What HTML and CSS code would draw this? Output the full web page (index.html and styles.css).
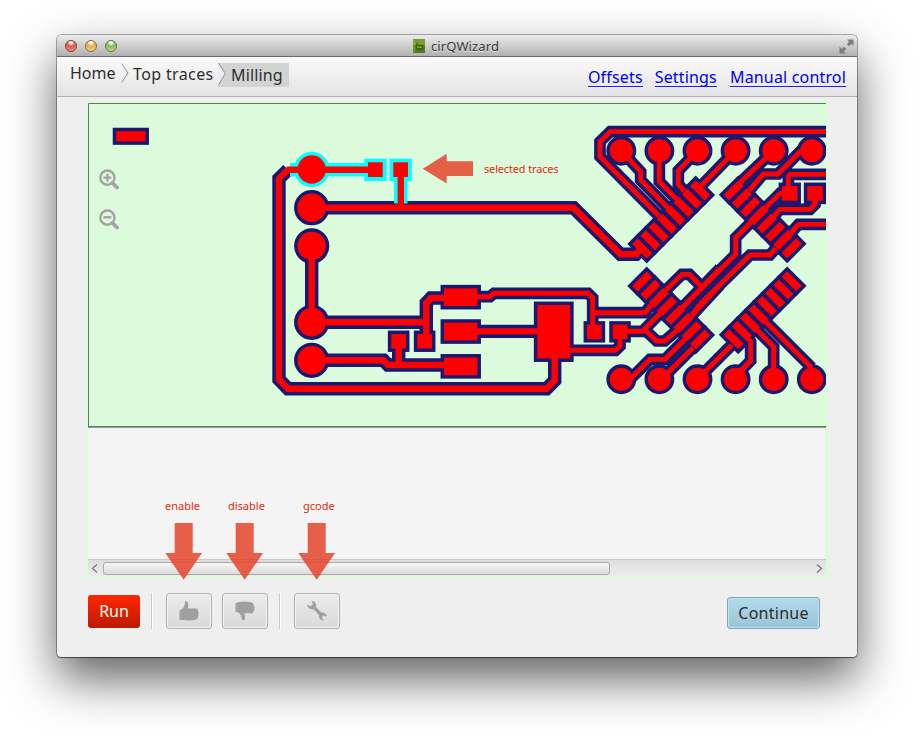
FILE: index.html
```html
<!DOCTYPE html>
<html lang="en">
<head>
<meta charset="utf-8">
<title>cirQWizard</title>
<link rel="stylesheet" href="styles.css">
</head>
<body>
<main class="window">
  <header class="titlebar">
    <div class="lights"><i class="light red"></i><i class="light yellow"></i><i class="light green"></i></div>
    <div class="title">
      <svg class="app-icon" width="12" height="14" viewBox="0 0 12 14"><rect width="12" height="14" fill="#54801c"/><rect width="12" height="6" fill="#76a02c"/><path d="M4 3.500V10H9.500V6.500H5" fill="none" stroke="#3a5f14" stroke-width="1.300"/><path d="M4 8.200H9" stroke="#8fb646"/><path d="M1 1V13" stroke="#8fb646" stroke-width=".8"/></svg>
      <span class="title-text">cirQWizard</span>
    </div>
    <svg class="expand" width="15" height="15" viewBox="0 0 15 15"><path d="M8 0.500H14.500V7L12.300 4.900 10 7.200 7.800 5 10.100 2.700ZM.5 7.500V14.500H7L4.900 12.300 7.200 10 5 7.800 2.700 10.100Z" fill="#7d7d7d"/></svg>
  </header>
  <nav class="navbar">
    <div class="crumbs">
      <span class="crumb home">Home</span>
      <svg class="sep" width="8" height="20" viewBox="0 0 8 20"><path d="M.7.5 7 10 .7 19.500" fill="none" stroke="#8e8e93"/></svg>
      <span class="crumb top">Top traces</span>
      <span class="crumb current"><svg class="notch" width="8" height="24" viewBox="0 0 8 24"><path d="M0 0 7.500 10.500 0 23Z" fill="#ececec"/><path d="M.5 0 7.300 10.500.5 22" fill="none" stroke="#8e8e93"/></svg><span class="milling">Milling</span></span>
    </div>
    <div class="links"><a class="l1">Offsets</a><a class="l2">Settings</a><a class="l3">Manual control</a></div>
  </nav>
  <section class="content">
    <div class="board">
      <svg class="pcb" width="738" height="325" viewBox="88 103 738 325">
        <defs>
          <g id="row">
            <rect x="-44.900" y="-10.300" width="7.800" height="20.600"/><rect x="-33.200" y="-10.300" width="7.800" height="20.600"/>
            <rect x="-21.500" y="-10.300" width="7.800" height="20.600"/><rect x="-9.800" y="-10.300" width="7.800" height="20.600"/>
            <rect x="2" y="-10.300" width="7.800" height="20.600"/><rect x="13.700" y="-10.300" width="7.800" height="20.600"/>
            <rect x="25.400" y="-10.300" width="7.800" height="20.600"/><rect x="37.100" y="-10.300" width="7.800" height="20.600"/>
          </g>
          <g id="pads">
            <rect x="116.200" y="131.200" width="29.300" height="10.200"/>
            <circle cx="311.700" cy="207.700" r="14.200"/><circle cx="311.700" cy="246" r="14.200"/>
            <circle cx="311.700" cy="322.300" r="14.200"/><circle cx="311.700" cy="360.300" r="14.200"/>
            <rect x="391.300" y="334" width="14.700" height="14.500"/><rect x="417.300" y="334" width="14.700" height="14.500"/>
            <rect x="444" y="288.300" width="33.500" height="17.700"/><rect x="444" y="322.700" width="33.500" height="17.700"/><rect x="444" y="357.500" width="33.500" height="17.700"/>
            <rect x="537.300" y="305" width="32.900" height="53.500"/>
            <rect x="587" y="324.600" width="14.700" height="14.500"/><rect x="612.700" y="324.600" width="14.700" height="14.500"/>
            <rect x="782" y="186" width="15.500" height="14.700"/><rect x="807.300" y="186" width="15.500" height="14.700"/>
            <circle cx="621.300" cy="150.700" r="11.500"/><circle cx="659.400" cy="150.700" r="11.500"/><circle cx="697.500" cy="150.700" r="11.500"/><circle cx="735.600" cy="150.700" r="11.500"/><circle cx="773.700" cy="150.700" r="11.500"/><circle cx="811.800" cy="150.700" r="11.500"/>
            <circle cx="621.300" cy="379.300" r="11.500"/><circle cx="659.400" cy="379.300" r="11.500"/><circle cx="697.500" cy="379.300" r="11.500"/><circle cx="735.600" cy="379.300" r="11.500"/><circle cx="773.700" cy="379.300" r="11.500"/><circle cx="811.800" cy="379.300" r="11.500"/>
            <use href="#row" transform="translate(671.200 219.500) rotate(-45)"/>
            <use href="#row" transform="translate(762.700 219.300) rotate(45)"/>
            <use href="#row" transform="translate(762.700 310.300) rotate(-45)"/>
            <use href="#row" transform="translate(671.200 310.500) rotate(45)"/>
          </g>
          <g id="wide">
            <path d="M288 169.700 279 178.500V379.500L288 388.700H546.500L554.700 380.500V355"/>
            <path d="M311.700 207.700H573.500L620.500 254.200H636L641 249"/>
            <path d="M311.700 246V322.300H426.300M426.300 338V303L431 298H446"/>
            <path d="M311.700 360.300H383.500L388 365H446M398.700 345V365M476 331.400H540"/>
          </g>
          <g id="thin">
            <path d="M476 296.700H490L494 293.300H588L592.700 298V328M592.700 312.700H645L651 305"/>
            <path d="M568 350.300H615.500L620 346V336M625 331.300H642.500L660 313.500"/>
            <path transform="translate(590 110) scale(.33333)" d="M730 65H61L30 95V140L208 319M94 122 152 185V210L235 295M208 122V215L260 268M323 122 265 182V223L283 243M436 122 333 228"/>
            <path transform="translate(700 110) scale(.33333)" d="M221 122 121 217M335 122 300 125 234 192H190L147 242M265 240V203Q265 193 275 193H400M345 260V283L330 298H240L222 318M255 250H240L197 293M400 343H296L272 369M228 414 210 435H150L0 583M153 337 107 383V433L-57 597"/>
            <path transform="translate(590 250) scale(.33333)" d="M227 121 276 73H298L335 110M390 55 278 172M390 105 304 198M330 163 304 198M165 240 200 273H224L260 242M286 267 225 328H180L120 388M309 293 220 382"/>
            <path transform="translate(700 250) scale(.33333)" d="M-8 388 95 285M146 266 152 275V332L107 378M172 241 221 290V388M197 215 335 353"/>
          </g>
        </defs>
        <g class="outline"><use class="w-out" href="#wide"/><use class="t-out" href="#thin"/><use class="p-out" href="#pads"/></g>
        <g class="selected">
          <path d="M290 169.700H370M400.800 175V203.500"/>
          <circle cx="311.700" cy="169.500" r="17.700"/>
          <rect x="364.300" y="158.700" width="22.300" height="22.300"/><rect x="389.500" y="158.700" width="22.300" height="22.300"/>
        </g>
        <g class="copper">
          <use class="w-in" href="#wide"/><use class="t-in" href="#thin"/><use class="p-in" href="#pads"/>
          <path class="w-in" d="M286.500 169.700H370M400.800 175V207"/>
          <circle class="p-in" cx="311.700" cy="169.500" r="14.200"/>
          <rect class="p-in" x="368" y="162.300" width="14.700" height="14.700"/><rect class="p-in" x="393.300" y="162.300" width="14.700" height="14.700"/>
        </g>
        <path d="M826 103.500H88.500V426.500" fill="none" stroke="#66776a"/>
        <path d="M88 426.800H826" stroke="#3c463c" stroke-width="1.300"/>
      </svg>
      <div class="zoomers">
        <svg width="20" height="21" viewBox="0 0 20 21"><circle cx="8.400" cy="8.600" r="7.100"/><path class="handle" d="M13.500 14 18 18.500"/><path d="M4.500 8.600H12.300M8.400 4.700V12.500"/></svg>
        <svg width="20" height="21" viewBox="0 0 20 21"><circle cx="8.400" cy="8.600" r="7.100"/><path class="handle" d="M13.500 14 18 18.500"/><path d="M4.500 8.300H12.300"/></svg>
      </div>
      <div class="blank"></div>
      <div class="scrollbar">
        <svg width="15" height="16" viewBox="0 0 15 16"><path d="M9 4.500 4.500 8.500 9 12.500"/></svg>
        <div class="thumb"></div>
        <svg width="15" height="16" viewBox="0 0 15 16"><path d="M6 4.500 10.500 8.500 6 12.500"/></svg>
      </div>
    </div>
    <div class="toolbar">
      <button class="run"><span>Run</span></button>
      <i class="divider"></i>
      <button class="tool"><svg width="22" height="22" viewBox="0 0 22 22"><path d="M1.500 10.500Q4 9.500 5.500 7.500 7 5.500 7 2 7.500.8 9 1.500 10.800 2.800 10.300 5.500L9.700 8.500H18.500Q20.500 8.700 20 10.800 21 12 20.300 13.500 21 15 20 16.500 20.200 18.300 18.500 19.500 15 20.800 10 20.500 7.500 20 6 20H1.500Z"/></svg></button>
      <button class="tool second"><svg width="22" height="22" viewBox="0 0 22 22"><path d="M1.500 11.500V3.500Q2.500 2 5 2L11 1.500Q16.500 1.500 18.500 3 20 4.300 19.800 5.800 21 7.200 20.400 8.800 20.800 10.500 19.500 11.500 19.300 13.500 17 13.500L10.500 13Q11.200 15.800 11 18.500 10.800 20.700 9 20.500 7.500 20 7.500 17.500 7 14.500 4.500 12.500Z"/></svg></button>
      <i class="divider d2"></i>
      <button class="tool third"><svg width="22" height="22" viewBox="0 0 22 22"><path d="M5.800.9Q9 1 10 4 10.300 5.500 9.800 6.800L15.300 12.600Q18 12 19.800 14.200 20.900 15.300 20.900 16.500L17.500 15.400 15.800 17.200 17.800 20.500Q14.500 20.600 13.200 17.800 12.800 16.400 13.200 15.200L7.500 9.300Q4.800 9.800 2.800 8 1 6.500 1 4.700L4.300 6.200 6.800 4.300Z"/></svg></button>
      <button class="continue"><span>Continue</span></button>
    </div>
  </section>
</main>
<aside class="notes">
  <svg width="914" height="736" viewBox="0 0 914 736"><path d="M422.700 168.700 446.700 153.700V161.300H473V176H446.700V183.500Z"/><path d="M174.700 523H192.700V553H202L183.700 579.700 165.300 553H174.700Z"/><path d="M235.700 523H253.700V553H263L244.700 579.700 226.300 553H235.700Z"/><path d="M307.700 523H325.700V553H335L316.700 579.700 298.300 553H307.700Z"/></svg>
  <span class="note n-sel">selected traces</span>
  <span class="note n-en">enable</span>
  <span class="note n-dis">disable</span>
  <span class="note n-g">gcode</span>
</aside>
</body>
</html>
```
FILE: styles.css
```css
* { box-sizing: border-box; }
body { margin: 0; width: 914px; height: 736px; overflow: hidden; background: #fff; font-family: "Noto Sans", "Open Sans", sans-serif; color: #2d2d2d; position: relative; padding: 35px 57px 0; }
svg { display: block; flex: none; }
.window { width: 800px; height: 622px; background: #efefef; border-radius: 5px 5px 4px 4px; overflow: hidden; box-shadow: 0 0 0 1px rgba(0,0,0,.3), 0 1px 1px rgba(0,0,0,.4), 0 22px 48px rgba(0,0,0,.62); }
.titlebar { height: 22px; display: flex; align-items: center; justify-content: center; background: linear-gradient(#ececec, #d4d4d4 40%, #b0b0b0); border-bottom: 1px solid #6a6a6a; position: relative; }
.lights { position: absolute; left: 8px; top: 5px; display: flex; gap: 8px; }
.light { width: 12px; height: 12px; border-radius: 50%; border: 1px solid; }
.red { background: radial-gradient(circle at 50% 15%, #fff 8%, #d9594d 40%, #f0a59b 100%); border-color: #8c3a35; }
.yellow { background: radial-gradient(circle at 50% 15%, #fff 8%, #e3ac45 40%, #f8e29a 100%); border-color: #946a2c; }
.green { background: radial-gradient(circle at 50% 15%, #fff 8%, #86b858 40%, #cfe9a0 100%); border-color: #56793c; }
.title { display: flex; align-items: center; gap: 6px; margin-left: -2px; }
.title-text { font-size: 13px; line-height: 20px; letter-spacing: .12px; color: #3a3a3a; text-shadow: 0 1px 0 #e4e4e4; }
.expand { position: absolute; right: 3px; top: 4px; }
.navbar { height: 40px; display: flex; justify-content: space-between; background: linear-gradient(#fafafa, #e4e4e4); border-bottom: 1px solid #b2b2b2; padding: 0 11px 0 13px; font-size: 16px; line-height: 20px; }
.crumbs { display: flex; align-items: flex-start; padding-top: 6px; }
.home { width: 51px; }
.home, .top { white-space: nowrap; }
.top { width: 85px; margin-left: 4px; padding-top: 1px; letter-spacing: .37px; }
.current { display: flex; width: 71px; height: 24px; background: #d2d4d4; }
.milling { padding: 2px 0 0 5px; white-space: nowrap; letter-spacing: .15px; }
.links { display: flex; padding-top: 10px; color: #0000f0; white-space: nowrap; letter-spacing: .17px; }
.links a { height: 20px; border-bottom: 1px solid #2020f0; }
.l2 { margin-left: 12px; }
.l3 { margin-left: 13px; }
.content { padding: 4px 29px 0; }
.board { width: 742px; height: 477px; background: #dcfbdc; padding: 2px; position: relative; }
.outline, .copper { stroke-linejoin: miter; }
.w-out, .t-out { fill: none; stroke: #191970; stroke-width: 13.400; }
.t-out { stroke-width: 11.700; }
.p-out { fill: #191970; stroke: #191970; stroke-width: 6.900; }
#thin path { vector-effect: non-scaling-stroke; }
.w-in, .t-in { fill: none; stroke: #f00; stroke-width: 6.400; }
.t-in { stroke-width: 4.900; }
.p-in { fill: #f00; }
.selected { fill: #0ff; }
.selected path { stroke: #0ff; stroke-width: 13.400; }
.zoomers { position: absolute; left: 13px; top: 68px; display: flex; flex-direction: column; gap: 19px; }
.zoomers svg { fill: none; stroke: #a3a3a3; stroke-width: 2.400; }
.zoomers .handle { stroke-width: 3.800; stroke-linecap: round; }
.blank { width: 737px; height: 131px; background: #f4f4f4; }
.scrollbar { height: 17px; display: flex; background: linear-gradient(#dedede, #ececec); border-top: 1px solid #c9c9c9; }
.scrollbar svg { fill: none; stroke: #777; stroke-width: 1.300; }
.thumb { width: 507px; height: 13px; margin: 2px 201px 0 0; border: 1px solid #a9a9a9; border-radius: 3px; background: linear-gradient(#f6f6f6, #dcdcdc); }
.toolbar { display: flex; align-items: flex-start; padding: 15px 0 0 2px; }
button { display: flex; align-items: center; justify-content: center; padding: 0; font: 16px/20px "Noto Sans", sans-serif; border: 0; flex: none; }
.run { width: 52px; height: 33px; margin-top: 2px; padding-bottom: 1px; border-radius: 3px; background: linear-gradient(#ff2600, #bd1a00); color: #fff; }
.divider { width: 2px; height: 36px; margin: 0 13px 0 11px; background: #c9c9c9; border-right: 1px solid #fff; }
.tool { width: 46px; height: 36px; border: 1px solid #b2b2b2; border-radius: 3px; background: linear-gradient(#ebebeb, #dadada); box-shadow: inset 0 0 0 1px #f1f1f1; }
.tool svg { fill: #a0a0a0; }
.second { margin-left: 10px; }
.d2 { margin-left: 11px; }
.continue { width: 93px; height: 32px; margin: 4px 0 0 387px; border: 1px solid #7fa5b6; border-radius: 3px; background: linear-gradient(#b3dbec, #9ac3d8); box-shadow: inset 0 0 0 1px #c3e2ef; color: #2d2d2d; letter-spacing: .25px; }
.notes { position: absolute; left: 0; top: 0; width: 914px; height: 736px; }
.notes svg { fill: #e5452c; opacity: .85; }
.note { position: absolute; font-size: 11px; line-height: 14px; color: #e02a12; white-space: nowrap; }
.n-sel { left: 484px; top: 162px; letter-spacing: -.16px; }
.n-en { left: 165px; top: 499px; }
.n-dis { left: 228px; top: 499px; }
.n-g { left: 303px; top: 499px; }
```
